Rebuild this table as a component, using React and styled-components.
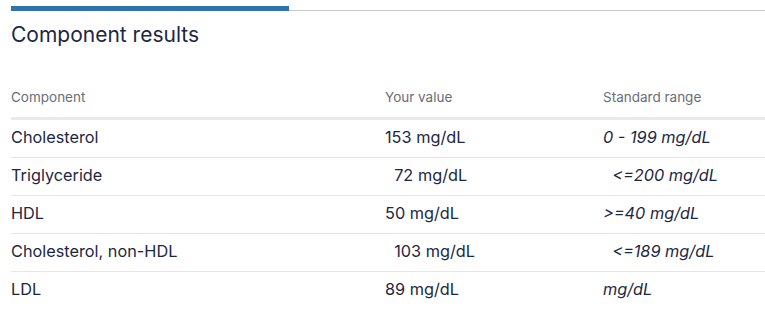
import React from 'react'
import styled, { createGlobalStyle } from 'styled-components'

const GlobalStyle = createGlobalStyle`
	body {
		margin: 0;
		background: #fff;
		font-family: Inter, "Liberation Sans", sans-serif;
		color: #1d2742;
	}
`

const Page = styled.div`
	padding: 6px 0 0 11px;
`

const Progress = styled.div`
	display: flex;
	align-items: flex-end;
`

const ProgressFill = styled.div`
	width: 278px;
	height: 5px;
	background: #2f73ad;
`

const ProgressRest = styled.div`
	flex: 1;
	height: 1px;
	background: #c8c8cc;
`

const Title = styled.h2`
	margin: 12px 0 0;
	font-size: 21px;
	line-height: 24px;
	font-weight: 400;
	color: #1d2742;
`

const Table = styled.div`
	margin-top: 42px;
	display: grid;
	grid-template-columns: 374px 218px 1fr;
`

const HeadCell = styled.div`
	font-size: 13.5px;
	line-height: 16px;
	color: #6a6d78;
	padding-bottom: 12px;
	border-bottom: 3px solid #e8e8ed;
`

const Cell = styled.div`
	font-size: 16.3px;
	line-height: 20px;
	padding: 7px 0 10px;
	white-space: pre;
	font-style: ${p => p.range ? 'italic' : 'normal'};
	border-bottom: ${p => p.last ? 'none' : '1px solid #e6e6ea'};
`

const rows = [
	['Cholesterol', '153 mg/dL', '0 - 199 mg/dL'],
	['Triglyceride', '  72 mg/dL', '  <=200 mg/dL'],
	['HDL', '50 mg/dL', '>=40 mg/dL'],
	['Cholesterol, non-HDL', '  103 mg/dL', '  <=189 mg/dL'],
	['LDL', '89 mg/dL', 'mg/dL'],
]

const App = () => (
	<Page>
		<GlobalStyle/>
		<Progress>
			<ProgressFill/>
			<ProgressRest/>
		</Progress>
		<Title>Component results</Title>
		<Table>
			<HeadCell>Component</HeadCell>
			<HeadCell>Your value</HeadCell>
			<HeadCell>Standard range</HeadCell>
			{rows.map(([name, value, range], i) => {
				const last = i === rows.length - 1
				return (
					<React.Fragment key={name}>
						<Cell last={last}>{name}</Cell>
						<Cell last={last}>{value}</Cell>
						<Cell last={last} range>{range}</Cell>
					</React.Fragment>
				)
			})}
		</Table>
	</Page>
)

export default App
